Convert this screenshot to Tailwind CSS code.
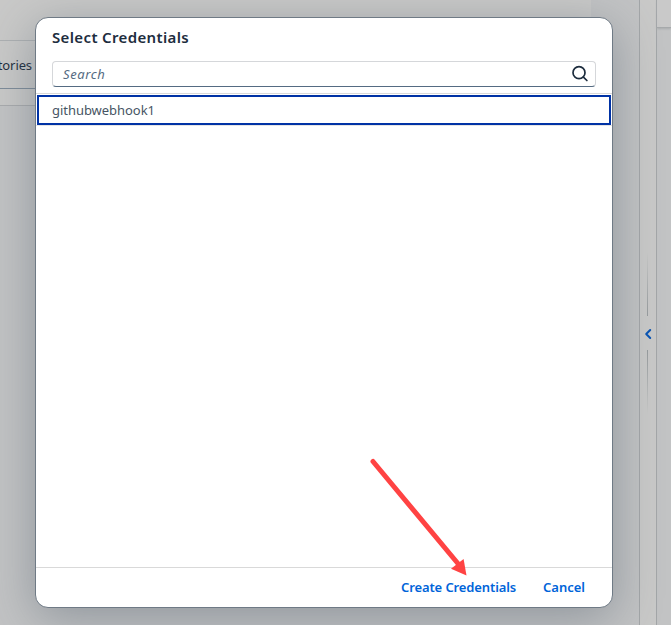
<!DOCTYPE html>
<html lang="en">
<head>
<meta charset="utf-8">
<title>Select Credentials</title>
<script src="https://cdn.jsdelivr.net/npm/@tailwindcss/browser@4"></script>
</head>
<body class="relative h-[625px] w-[671px] overflow-hidden bg-[#c2c3c4] font-['Noto_Sans',sans-serif] text-[13px]">
<!-- Page behind the dialog -->
<div class="flex h-full w-full">
  <main class="w-[639px] shrink-0">
    <div class="w-[591px] bg-[#c9c9c8]">
      <div class="h-[41px] border-b border-[#adb0b2]"></div>
      <div class="flex h-12 w-8 items-center justify-end pt-0.5 text-[#1d2d3e]"><span class="tracking-[-0.1px]">tories</span></div>
      <div class="-mt-px h-[18px] border-y border-t-[#7e8c99] border-b-[#a9abad]"></div>
    </div>
  </main>
  <div class="flex w-[18px] shrink-0 flex-col items-center border-x border-[#a3a6a8] bg-[#c9c9c8] pr-px pt-[252px]">
    <div class="h-16 w-px bg-linear-to-b from-transparent to-[#969a9d]"></div>
    <svg class="my-[9px] h-4 w-4" viewBox="0 0 16 16" fill="none" stroke="#0854b4" stroke-width="2" stroke-linecap="round" stroke-linejoin="round"><path d="m10.200 5-4 4 4 4"/></svg>
    <div class="h-16 w-px bg-linear-to-b from-[#969a9d] to-transparent"></div>
  </div>
  <aside class="flex-1"><div class="h-7 border-b border-[#a6a9ab] bg-[#c9c9c9] shadow-[0_1px_2px_#a9acae]"></div></aside>
</div>

<!-- Dialog -->
<section class="absolute left-[35px] top-[17px] flex h-[591px] w-[578px] flex-col overflow-hidden rounded-[13px] border border-[#6f7a85] bg-white shadow-[0_10px_48px_0_rgba(85,98,111,0.47)]">
  <header class="h-[76px] shrink-0 border-b border-[#d9d9d9] px-4 pt-2">
    <h1 class="h-[22px] whitespace-nowrap text-[15px] leading-[22px] font-semibold text-[#1d2d3e]"><span class="tracking-[0.36px]">Select Credentials</span></h1>
    <div class="mt-[13px] flex h-[26px] items-center justify-between rounded border border-[#d5d7da] border-b-[#556b82] pl-[10px] pr-[6px]">
      <span class="pt-px text-[13px] tracking-[0.6px] text-[#556b82] italic">Search</span>
      <svg class="h-[18px] w-[18px]" viewBox="0 0 18 18" fill="none" stroke="#1d2d3e" stroke-width="1.700" stroke-linecap="round"><circle cx="8" cy="7.700" r="6"/><path d="m12.400 12.100 3.500 3.400"/></svg>
    </div>
  </header>
  <ul class="flex-1 pt-px">
    <li class="border-b border-[#e5e5e5] px-px"><div class="flex h-[30px] items-center border-2 border-[#0032a5] pl-[13px] pt-0.5 text-[#475564]"><span class="tracking-[-0.04px]">githubwebhook1</span></div></li>
  </ul>
  <footer class="flex h-10 shrink-0 items-center justify-end gap-[26px] border-t border-[#d9d9d9] pr-[26px] text-[13px] font-semibold text-[#0064d9]">
    <button class="w-[116px] whitespace-nowrap text-left"><span class="tracking-[-0.11px]">Create Credentials</span></button>
    <button class="w-[43px] text-left">Cancel</button>
  </footer>
</section>

<!-- Arrow annotation -->
<svg class="absolute left-[365px] top-[455px] h-[125px] w-[105px]" viewBox="365 455 105 125"><path d="M373 461.5 460 566" stroke="#ff4343" stroke-width="5" stroke-linecap="round"/><path d="m466.500 575.500-2.900-16.500-12.600 9.700z" fill="#ff4343"/></svg>
</body>
</html>
